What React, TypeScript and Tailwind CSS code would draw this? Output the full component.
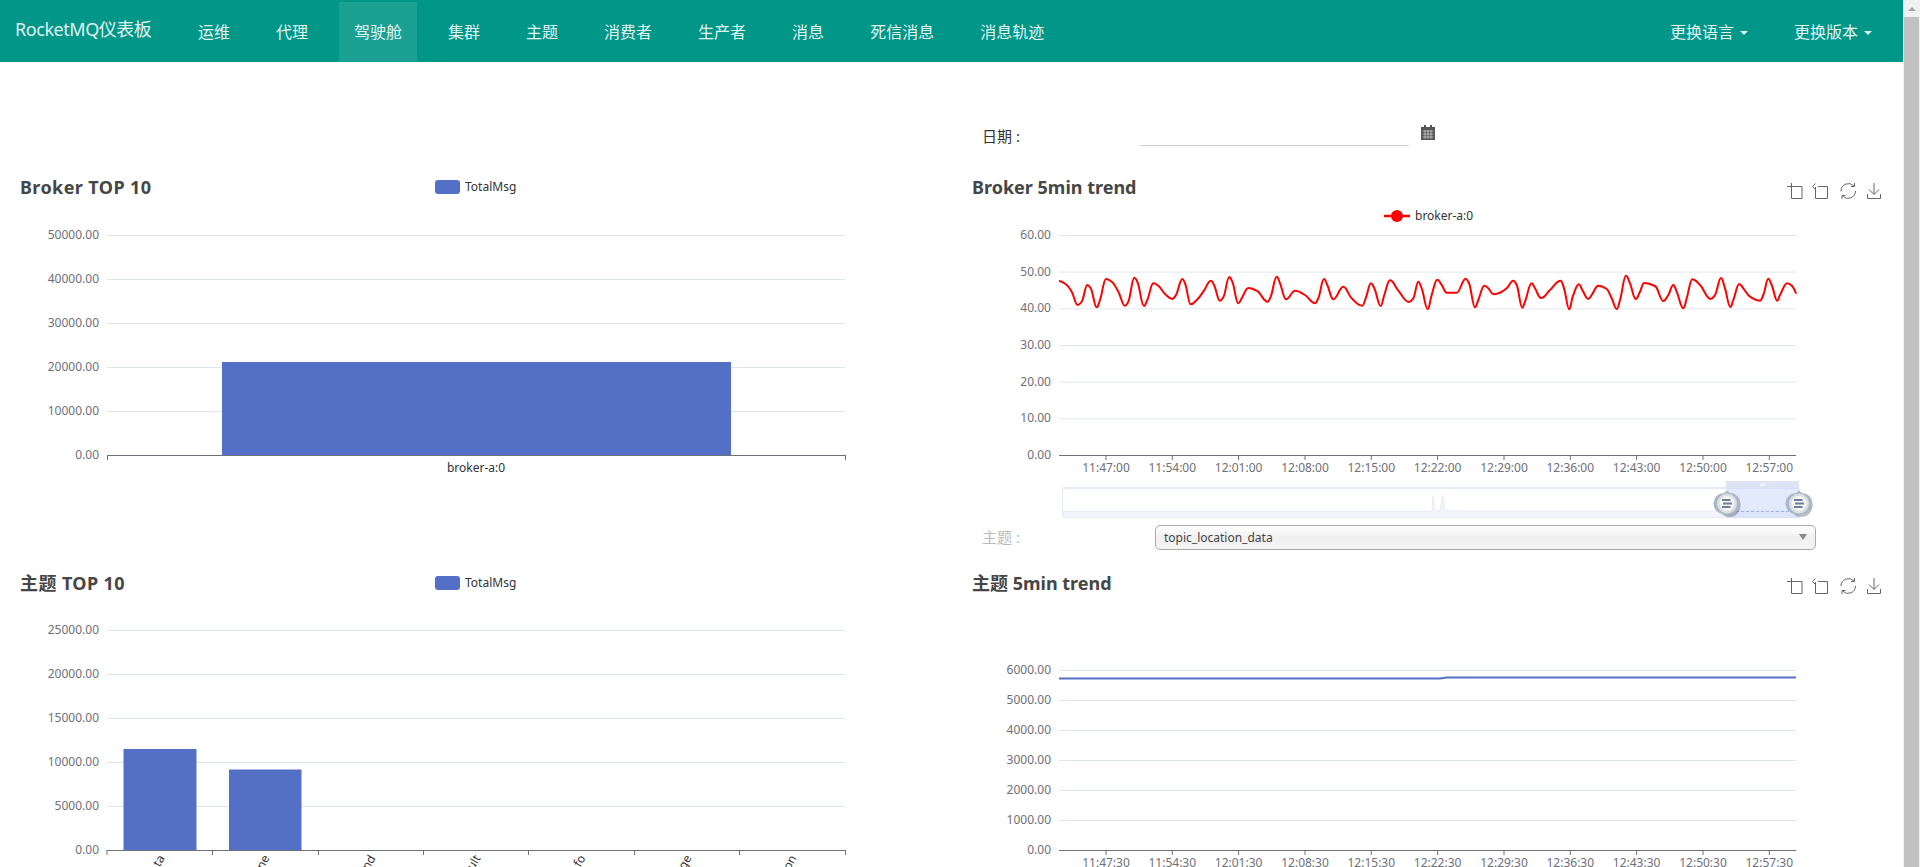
import React from "react";

const font = "font-['Noto_Sans','Noto_Sans_CJK_SC',sans-serif]";

const navItems = [
  "运维",
  "代理",
  "驾驶舱",
  "集群",
  "主题",
  "消费者",
  "生产者",
  "消息",
  "死信消息",
  "消息轨迹",
];

// traced from the chart, page coordinates
const seg1 = [
  [27, 183], [50, 195], [65, 215], [83, 255], [95, 245], [112, 195], [122, 205], [140, 262], [150, 240], [168, 177], [185, 185], [205, 215], [225, 257], [235, 245], [253, 173], [262, 185], [282, 258], [292, 240], [310, 190], [325, 197], [345, 222], [367, 237], [378, 225], [397, 177], [405, 190], [422, 253], [440, 240], [460, 215], [483, 182], [492, 195], [510, 242], [520, 232], [538, 171], [547, 185], [565, 250], [575, 235], [595, 204], [620, 212], [653, 245], [662, 230], [680, 170], [690, 190], [708, 238], [735, 212], [765, 225], [795, 250], [805, 235], [822, 177], [832, 195], [850, 238], [880, 200], [905, 235], [937, 257], [947, 235], [963, 190], [973, 205], [992, 258], [1003, 225], [1020, 181], [1045, 212], [1077, 246], [1090, 235], [1105, 185], [1115, 205], [1133, 268], [1145, 225], [1162, 179], [1175, 195], [1190, 218], [1220, 218], [1247, 176], [1257, 190], [1275, 262], [1285, 240], [1303, 197], [1315, 205], [1330, 223],
].map(([x, y]) => [1050 + x / 3, 220 + y / 3]);

const seg2 = [
  [0, 218], [20, 205], [40, 182], [50, 195], [67, 263], [75, 245], [95, 190], [105, 205], [123, 234], [150, 210], [182, 182], [192, 205], [208, 268], [218, 230], [237, 193], [247, 210], [265, 237], [275, 225], [295, 197], [320, 207], [335, 235], [350, 267], [360, 240], [378, 167], [390, 190], [407, 237], [420, 215], [432, 189], [465, 198], [490, 243], [505, 225], [520, 195], [530, 215], [550, 265], [560, 235], [577, 178], [600, 195], [632, 237], [645, 225], [663, 174], [675, 205], [691, 261], [700, 240], [718, 192], [730, 205], [750, 230], [780, 242], [790, 225], [805, 176], [815, 195], [832, 242], [840, 225], [862, 190], [878, 200], [890, 220],
].map(([x, y]) => [1500 + x / 3, 220 + y / 3]);

// monotone curve: flat tangent at each peak and trough, so the tops stay round
const smooth = (pts: number[][]) => {
  const slope = (i: number) => {
    if (i === 0 || i === pts.length - 1) return 0;
    const a = (pts[i][1] - pts[i - 1][1]) / (pts[i][0] - pts[i - 1][0]);
    const b = (pts[i + 1][1] - pts[i][1]) / (pts[i + 1][0] - pts[i][0]);
    if (a * b <= 0) return 0;
    return (2 * a * b) / (a + b);
  };
  let d = `M${pts[0][0]} ${pts[0][1]}`;
  for (let i = 0; i < pts.length - 1; i++) {
    const [x1, y1] = pts[i];
    const [x2, y2] = pts[i + 1];
    const dx = (x2 - x1) / 2.4;
    d += ` C${(x1 + dx).toFixed(1)} ${(y1 + slope(i) * dx).toFixed(1)} ${(x2 - dx).toFixed(1)} ${(y2 - slope(i + 1) * dx).toFixed(1)} ${x2.toFixed(1)} ${y2.toFixed(1)}`;
  }
  return d;
};

const tickX = [1106, 1172.3, 1238.6, 1305, 1371.3, 1437.6, 1504, 1570.3, 1636.6, 1703, 1769.3];

const YAxis = ({
  labels,
  x1,
  x2,
  y0,
  step,
}: {
  labels: string[];
  x1: number;
  x2: number;
  y0: number;
  step: number;
}) => (
  <>
    {labels.map((l, i) => {
      const y = y0 - i * step;
      return (
        <g key={l}>
          {i > 0 && <line x1={x1} x2={x2} y1={y + 0.5} y2={y + 0.5} stroke="#e0e6f1" />}
          <text x={x1 - 8} y={y + 4} textAnchor="end" fontSize="12" fill="#6e7079">
            {l}
          </text>
        </g>
      );
    })}
    <line x1={x1} x2={x2} y1={y0 + 0.5} y2={y0 + 0.5} stroke="#6e7079" />
  </>
);

const TimeAxis = ({ labels, y0 }: { labels: string[]; y0: number }) => (
  <>
    {labels.map((l, i) => (
      <g key={l}>
        <line x1={tickX[i]} x2={tickX[i]} y1={y0} y2={y0 + 5} stroke="#6e7079" />
        <text x={tickX[i]} y={y0 + 17} textAnchor="middle" fontSize="12" fill="#6e7079">
          {l}
        </text>
      </g>
    ))}
  </>
);

const Handle = ({ x }: { x: number }) => (
  <g transform={`translate(${x} 503.5)`}>
    <circle cx="2.5" cy="2.5" r="11" fill="#000" opacity="0.25" />
    <path d="M0 -13 L3 -10.500 A10.500 10.500 0 0 1 3 10.500 L0 13 L-3 10.500 A10.500 10.500 0 0 1 -3 -10.500 Z" fill="#a7b7cc" />
    <circle r="10" fill="#dedede" />
    <circle r="7.500" fill="#f4f4f4" />
    <path d="M-5 -3.500 H3.500 M-4 0 H5 M-5 3.500 H3.500" stroke="#6d7f9c" strokeWidth="2" fill="none" />
  </g>
);

const ToolIcons = () => (
  <svg width="95" height="16" viewBox="0 0 95 16" fill="none" stroke="#666" strokeWidth="1" className="shrink-0">
    <path d="M0 3.5H15V15.5H4.5V0" />
    <path d="M31 3.5H40.5V15.5H28.5V4M28.5 0.5L25.5 3.5L28.5 6.5" />
    <path d="M54 8A7.5 7.5 0 0 1 67 3M68.500 8A7.500 7.500 0 0 1 55.500 13M67.500 0V3.500H64M55 16V12.500H58.500" />
    <path d="M87 0V11M82 6.500L87 11.500L92 6.500M80.500 11V15.500H93.500V11" />
  </svg>
);

const Legend = () => (
  <div className="flex items-center">
    <span className="w-[25px] h-[14px] rounded-[3px] bg-[#5470c6]" />
    <span className="ml-[5px] text-xs leading-none text-[#333]">TotalMsg</span>
  </div>
);

const PanelTitle = ({ children }: { children: React.ReactNode }) => (
  <h2 className="text-lg font-bold leading-none text-[#464646]">{children}</h2>
);

const BrokerTop = () => (
  <svg width="951" height="361" viewBox="0 204 951 361" className="block">
    <YAxis labels={["0.00", "10000.00", "20000.00", "30000.00", "40000.00", "50000.00"]} x1={107} x2={845} y0={455} step={44} />
    <rect x="222" y="362" width="509" height="93" fill="#5470c6" />
    <line x1="107.500" x2="107.500" y1="455" y2="460" stroke="#6e7079" />
    <line x1="845.500" x2="845.500" y1="455" y2="460" stroke="#6e7079" />
    <text x="476" y="472" textAnchor="middle" fontSize="12" fill="#333">
      broker-a:0
    </text>
  </svg>
);

const BrokerTrend = () => (
  <svg width="952" height="321" viewBox="951 204 952 321" className="block">
    <line x1="1384" x2="1410" y1="216" y2="216" stroke="#f00" strokeWidth="2.500" />
    <circle cx="1397" cy="216" r="6" fill="#f00" />
    <text x="1415" y="220" fontSize="12" fill="#333">
      broker-a:0
    </text>
    <YAxis labels={["0.00", "10.00", "20.00", "30.00", "40.00", "50.00", "60.00"]} x1={1059} x2={1796} y0={455} step={36.67} />
    <TimeAxis y0={455} labels={["11:47:00", "11:54:00", "12:01:00", "12:08:00", "12:15:00", "12:22:00", "12:29:00", "12:36:00", "12:43:00", "12:50:00", "12:57:00"]} />
    <path d={smooth([...seg1, ...seg2])} fill="none" stroke="#f00" strokeWidth="2" />
    {/* data zoom */}
    <rect x="1062.500" y="487.500" width="737" height="30" rx="2" fill="#fff" stroke="#e4e9f6" />
    <rect x="1063" y="487" width="736" height="2" fill="#e6ebf8" />
    <path d="M1063 517.500V511.500H1430L1432 511 1433 496 1435 511H1440L1442.500 495 1445 510 1450 511H1799V517.500Z" fill="#f3f5fb" stroke="#e6ebf8" />
    <rect x="1726" y="488" width="73" height="30" fill="#c6d5f9" opacity="0.5" />
    <rect x="1726" y="481" width="73" height="7" fill="#dde4f4" />
    <path d="M1761 483V486M1763 483V486M1765 483V486" stroke="#fff" />
    <path d="M1726 511.500H1799" stroke="#9db5ee" strokeDasharray="3 2" />
    <Handle x={1727} />
    <Handle x={1799} />
  </svg>
);

const TopicTop = () => (
  <svg width="951" height="267" viewBox="0 600 951 267" className="block">
    <YAxis labels={["0.00", "5000.00", "10000.00", "15000.00", "20000.00", "25000.00"]} x1={107} x2={845} y0={850} step={44} />
    <rect x="123.500" y="749" width="73" height="101" fill="#5470c6" />
    <rect x="229" y="769.500" width="72.500" height="80.500" fill="#5470c6" />
    {[107, 212.500, 318.500, 423.500, 528.500, 634.500, 739.500, 845.500].map((x) => (
      <line key={x} x1={x} x2={x} y1="850" y2="855" stroke="#6e7079" />
    ))}
    {[
      ["ta", 165],
      ["ne", 270],
      ["nd", 376],
      ["ult", 481],
      ["fo", 586],
      ["ge", 692],
      ["on", 797],
    ].map(([t, x]) => (
      <text key={t} x={Number(x)} y="858" textAnchor="end" fontSize="12" fill="#333" transform={`rotate(-60 ${x} 858)`}>
        {t}
      </text>
    ))}
  </svg>
);

const TopicTrend = () => (
  <svg width="952" height="267" viewBox="951 600 952 267" className="block">
    <YAxis labels={["0.00", "1000.00", "2000.00", "3000.00", "4000.00", "5000.00", "6000.00"]} x1={1059} x2={1796} y0={850} step={30} />
    <TimeAxis y0={850} labels={["11:47:30", "11:54:30", "12:01:30", "12:08:30", "12:15:30", "12:22:30", "12:29:30", "12:36:30", "12:43:30", "12:50:30", "12:57:30"]} />
    <path d="M1059 678.500H1440L1447 677.500H1796" fill="none" stroke="#5470c6" strokeWidth="2" />
  </svg>
);

export default function App() {
  return (
    <div className={`flex h-[867px] w-[1920px] overflow-hidden bg-white ${font}`}>
      <div className="w-[1903px] overflow-hidden">
        <nav className="flex h-[62px] items-stretch bg-[#009688] text-[#e0f2f1]">
          <a className="pl-[15px] pt-[17px] w-[183px] text-lg leading-6 tracking-[-0.45px]">RocketMQ仪表板</a>
          <ul className="flex gap-4 pt-0.5">
            {navItems.map((item) => (
              <li
                key={item}
                className={`px-[15px] pt-[20px] text-base leading-5 ${item === "驾驶舱" ? "bg-[#1aa193]" : ""}`}
              >
                {item}
              </li>
            ))}
          </ul>
          <ul className="ml-auto flex gap-4 pr-4 pt-0.5">
            {["更换语言", "更换版本"].map((item) => (
              <li key={item} className="flex h-fit items-center px-[15px] pt-[20px] text-base leading-5">
                {item}
                <span className="ml-1.5 mt-0.5 border-x-4 border-t-4 border-x-transparent border-t-[#e0f2f1]" />
              </li>
            ))}
          </ul>
        </nav>

        <div className="grid h-[108px] grid-cols-[951px_952px]">
          <div />
          <div className="flex items-start pl-[31px] pt-[62px]">
            <span className="w-[158px] text-[15px] leading-6 text-[#333]">日期 :</span>
            <div className="h-[22px] w-[269px] border-b border-[#d2d2d2]" />
            <svg width="14" height="15" viewBox="0 0 14 15" className="ml-3 mt-px" fill="#555">
              <path d="M3 0H5V2H9V0H11V2H14V15H0V2H3Z" />
              <path d="M1.500 6H12.500M1.500 9H12.500M1.500 12H12.500M4 5V14M7 5V14M10 5V14" stroke="#ccc" strokeWidth="0.800" />
            </svg>
          </div>
        </div>

        <div className="grid grid-cols-[951px_952px]">
          <div>
            <div className="flex h-[34px] items-center pl-5">
              <div className="w-[415px] tracking-[0.4px]">
                <PanelTitle>Broker TOP 10</PanelTitle>
              </div>
              <Legend />
            </div>
            <BrokerTop />
          </div>
          <div>
            <div className="flex h-[34px] items-center justify-between pl-[21px] pr-[21px]">
              <PanelTitle>Broker 5min trend</PanelTitle>
              <div className="mt-[7px]">
                <ToolIcons />
              </div>
            </div>
            <BrokerTrend />
            <div className="flex h-[25px] items-center pl-[31px] pr-[87px]">
              <span className="w-[173px] text-[15px] text-[#bbb]">主题 :</span>
              <div className="relative flex h-full flex-1 items-center rounded-[5px] border border-[#aaa] bg-linear-to-b from-white via-[#f0f0f0] via-50% to-[#f4f4f4] pl-2 text-xs text-[#444]">
                topic_location_data
                <span className="absolute right-2 top-[8px] border-x-[4px] border-t-[6px] border-x-transparent border-t-[#888]" />
              </div>
            </div>
          </div>
        </div>

        <div className="mt-px grid grid-cols-[951px_952px]">
          <div>
            <div className="flex h-[34px] items-center pl-5">
              <div className="w-[415px] tracking-[0.4px]">
                <PanelTitle>主题 TOP 10</PanelTitle>
              </div>
              <Legend />
            </div>
            <TopicTop />
          </div>
          <div>
            <div className="flex h-[34px] items-center justify-between pl-[21px] pr-[21px]">
              <PanelTitle>主题 5min trend</PanelTitle>
              <div className="mt-[5px]">
                <ToolIcons />
              </div>
            </div>
            <TopicTrend />
          </div>
        </div>
      </div>

      <div className="flex w-[17px] flex-col bg-[#f1f1f1]">
        <div className="flex h-[17px] items-center justify-center">
          <span className="border-x-4 border-b-4 border-x-transparent border-b-[#a3a3a3]" />
        </div>
        <div className="mx-px flex-1 bg-[#c1c1c1]" />
      </div>
    </div>
  );
}
